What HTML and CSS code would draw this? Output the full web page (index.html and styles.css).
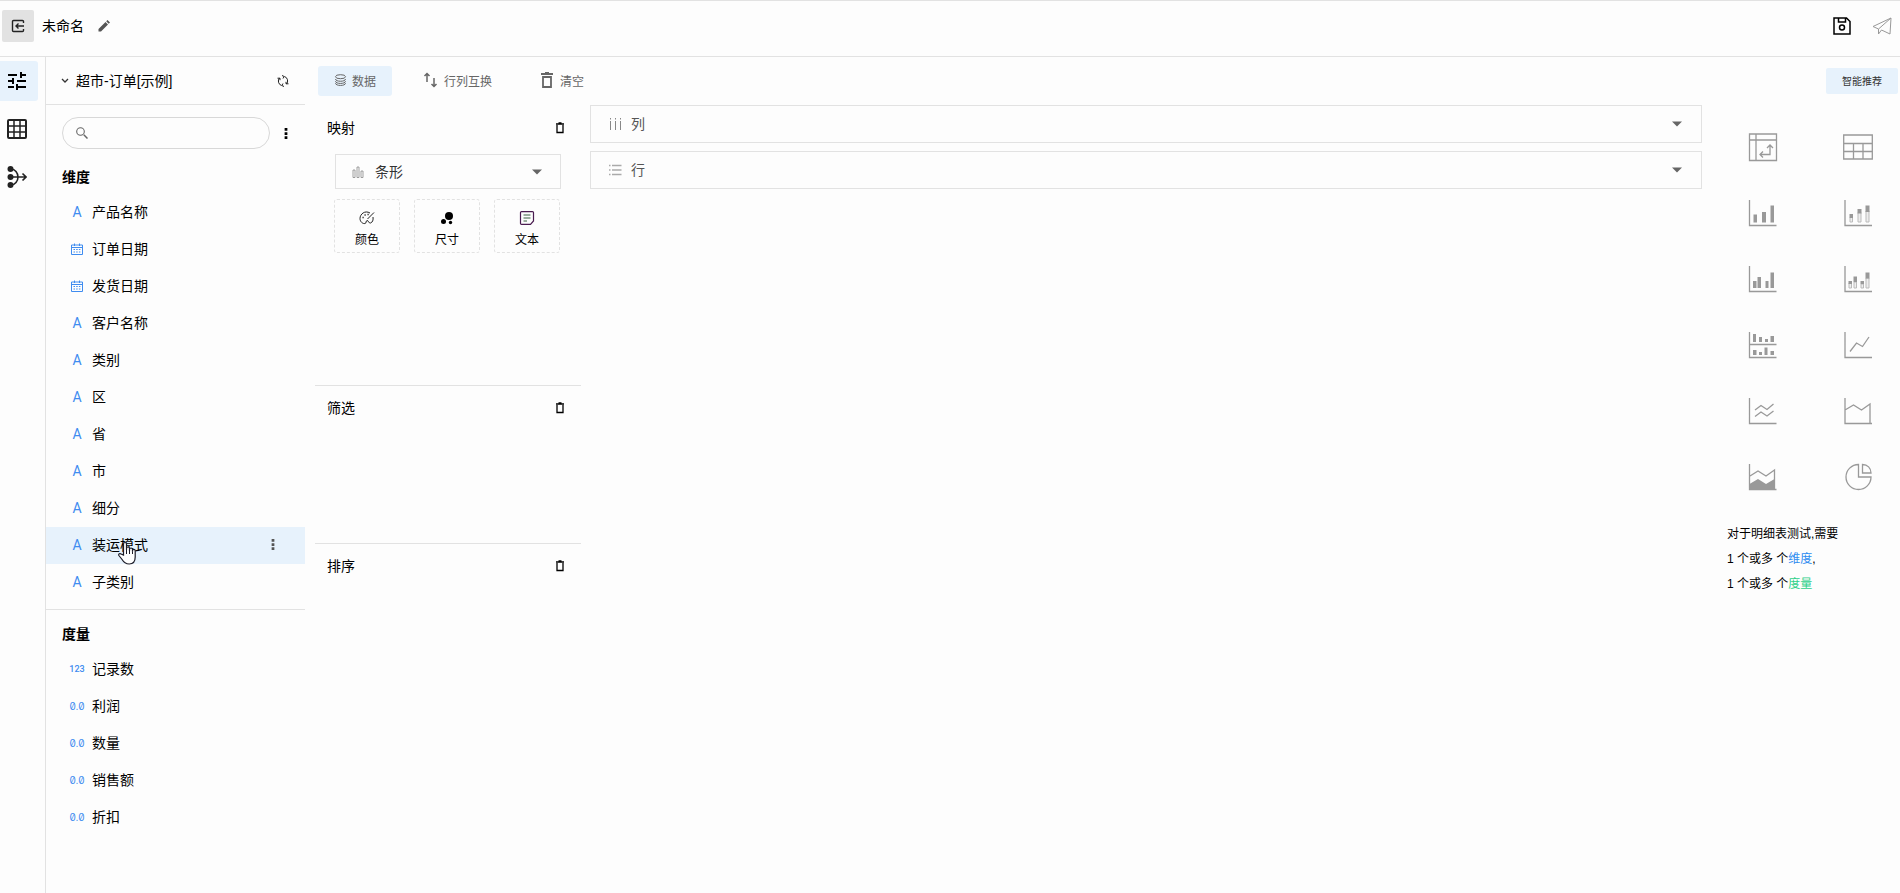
FILE: index.html
```html
<!DOCTYPE html>
<html lang="zh-CN">

<head>
    <meta charset="UTF-8">
    <meta name="viewport" content="width=device-width, initial-scale=1.0">
    <title>未命名</title>
    <link rel="stylesheet" href="styles.css">
</head>

<body>
    <svg class="sprite" aria-hidden="true">
        <symbol id="trash" viewBox="0 0 10 12">
            <path d="M1 2h8M3.500 1h3M2 3v7.500h6V3" fill="none" stroke="currentColor" stroke-width="1.300" />
        </symbol>
        <symbol id="dots" viewBox="0 0 4 12">
            <path d="M.5 0h3v3h-3zM.5 4.500h3v3h-3zM.5 9h3v3h-3z" fill="currentColor" />
        </symbol>
        <symbol id="calendar" viewBox="0 0 12 12">
            <path d="M.5 2h11v9.500H.5zM.5 4.500h11M3.500.5V3M8.500.5V3" fill="none" stroke="currentColor" />
            <path d="M2.500 6.500h7M2.500 9h7" fill="none" stroke="currentColor" stroke-dasharray="1.500 1.200" />
        </symbol>
        <symbol id="caret" viewBox="0 0 10 6">
            <path d="M0 .5h10L5 5.500z" fill="currentColor" />
        </symbol>
    </svg>

    <header class="header">
        <button class="back-btn" aria-label="返回">
            <svg width="14" height="14" viewBox="0 0 14 14">
                <path d="M12.500 4V2.500a1 1 0 0 0-1-1h-9a1 1 0 0 0-1 1v9a1 1 0 0 0 1 1h9a1 1 0 0 0 1-1V10M13 7H5M7.500 4.500L5 7l2.500 2.500" />
            </svg>
        </button>
        <h1 class="title">未命名</h1>
        <button class="icon-btn edit-btn" aria-label="编辑">
            <svg width="12" height="12" viewBox="0 0 12 12">
                <path d="M.5 11.500V9L7.500 2l2.500 2.500-7 7zM8.200 1.300L9.500 0 12 2.500l-1.300 1.300z" fill="#555" />
            </svg>
        </button>
        <div class="header-actions">
            <button class="icon-btn" aria-label="保存">
                <svg width="18" height="18" viewBox="0 0 18 18">
                    <path d="M1 1h12.500L17 4.500V17H1zM5.500 1v4h7V1" fill="none" stroke="#000" stroke-width="1.500" />
                    <circle cx="9" cy="10.500" r="2.500" fill="none" stroke="#000" stroke-width="1.500" />
                </svg>
            </button>
            <button class="icon-btn" aria-label="发布">
                <svg width="20" height="18" viewBox="0 0 20 18">
                    <path d="M19 1L1 9.500l5.500 2.500L19 1l-1 16-8.500-4M6.500 12v5l3-4" fill="none" stroke="#999" stroke-linejoin="round" />
                </svg>
            </button>
        </div>
    </header>

    <div class="layout">
        <nav class="rail">
            <button class="rail-btn active" aria-label="设置">
                <svg width="20" height="20" viewBox="0 0 20 20">
                    <path d="M1 4h9M14 4h5M14 1v6M1 10h5M10 10h9M6 7v6M1 16h6M10 16h9M10 13v6" stroke-width="2" />
                </svg>
            </button>
            <button class="rail-btn" aria-label="表格">
                <svg width="20" height="20" viewBox="0 0 20 20">
                    <rect x="1" y="1" width="18" height="18" rx="1" stroke-width="2" />
                    <path d="M7 1v18M13 1v18M1 7h18M1 13h18" stroke-width="1.500" />
                </svg>
            </button>
            <button class="rail-btn" aria-label="关联">
                <svg width="20" height="22" viewBox="0 0 20 22">
                    <circle cx="3.500" cy="3" r="3" fill="#222" stroke="none" />
                    <circle cx="3.500" cy="11" r="3" fill="#222" stroke="none" />
                    <circle cx="3.500" cy="19" r="3" fill="#222" stroke="none" />
                    <path d="M3 11h16M15.500 7.500L19 11l-3.500 3.500M4 3c4 0 7 4 7 8s-3 8-7 8" stroke-width="1.600" />
                </svg>
            </button>
        </nav>

        <aside class="sidebar">
            <div class="dataset">
                <svg width="8" height="6" viewBox="0 0 8 6">
                    <path d="M1 1l3 3 3-3" fill="none" stroke="#333" stroke-width="1.300" />
                </svg>
                <span class="dataset-name">超市-订单[示例]</span>
                <button class="icon-btn" aria-label="刷新">
                    <svg width="12" height="12" viewBox="0 0 12 12">
                        <path d="M4.500 10.500A4.700 4.700 0 0 1 2.500 3M7.500 1.500A4.700 4.700 0 0 1 9.500 9M.5 3.200h2.500v2M11.500 8.800H9v-2M5 .5L7.200 1.500 6 3.500M7 11.500l-2.200-1L6 8.500" fill="none" stroke="#222" />
                    </svg>
                </button>
            </div>

            <div class="search-row">
                <label class="search">
                    <svg width="12" height="12" viewBox="0 0 12 12">
                        <path d="M7.800 7.800L11.500 11.500" stroke="#666" stroke-width="1.500" />
                        <circle cx="4.500" cy="4.500" r="3.800" fill="none" stroke="#666" stroke-width="1.100" />
                    </svg>
                    <input type="text" aria-label="搜索">
                </label>
                <button class="icon-btn" aria-label="更多"><svg width="4" height="11"><use href="#dots" /></svg></button>
            </div>

            <section class="fields">
                <h2>维度</h2>
                <ul>
                    <li><span class="type">A</span>产品名称</li>
                    <li><span class="type"><svg width="12" height="12"><use href="#calendar" /></svg></span>订单日期</li>
                    <li><span class="type"><svg width="12" height="12"><use href="#calendar" /></svg></span>发货日期</li>
                    <li><span class="type">A</span>客户名称</li>
                    <li><span class="type">A</span>类别</li>
                    <li><span class="type">A</span>区</li>
                    <li><span class="type">A</span>省</li>
                    <li><span class="type">A</span>市</li>
                    <li><span class="type">A</span>细分</li>
                    <li class="hovered">
                        <span class="type">A</span>装运模式
                        <button class="icon-btn row-menu" aria-label="更多"><svg width="4" height="11"><use href="#dots" /></svg></button>
                        <svg class="pointer" width="18" height="24" viewBox="0 0 18 24">
                            <path d="M5.500 14V3a1.500 1.500 0 0 1 3 0v6-1.500a1.400 1.400 0 0 1 3 0V10 8.500a1.400 1.400 0 0 1 3 0v2.200-1a1.300 1.300 0 0 1 2.700 0V16c0 4-2 7-6 7-4.500 0-6-2.500-7.500-5L.9 14.500c-.8-1.500 1-2.600 2.200-1.500z" fill="#fff" stroke="#1c1c28" stroke-width="1.200" />
                            <path d="M8.500 9v4M11.500 10v3M14.500 10.500V13" stroke="#1c1c28" />
                        </svg>
                    </li>
                    <li><span class="type">A</span>子类别</li>
                </ul>
            </section>

            <section class="fields measures">
                <h2>度量</h2>
                <ul>
                    <li><span class="type int">123</span>记录数</li>
                    <li><span class="type decimal">0.0</span>利润</li>
                    <li><span class="type decimal">0.0</span>数量</li>
                    <li><span class="type decimal">0.0</span>销售额</li>
                    <li><span class="type decimal">0.0</span>折扣</li>
                </ul>
            </section>
        </aside>

        <main class="workspace">
            <div class="toolbar">
                <button class="tool-btn active">
                    <svg width="13" height="12" viewBox="0 0 13 12">
                        <ellipse cx="6.500" cy="2.700" rx="5" ry="2" />
                        <path d="M1.500 5c0 3 10 3 10 0M1.500 7.200c0 3 10 3 10 0M1.500 9.200c0 3 10 3 10 0" />
                    </svg>
                    数据
                </button>
                <button class="tool-btn">
                    <svg width="16" height="16" viewBox="0 0 16 16">
                        <path d="M4 10V1.500M1.500 4L4 1.500 6.500 4M11 6v8.500M8.500 12l2.500 2.500 2.500-2.500" stroke-width="1.500" />
                    </svg>
                    行列互换
                </button>
                <button class="tool-btn">
                    <svg width="16" height="16" viewBox="0 0 16 16">
                        <path d="M2 2h12M6 1h4M4 5v10h8V5z" stroke-width="1.800" />
                    </svg>
                    清空
                </button>
            </div>

            <div class="board">
                <div class="shelves">
                    <section class="shelf mapping">
                        <div class="shelf-head">
                            <h3>映射</h3>
                            <button class="icon-btn" aria-label="清空映射"><svg width="10" height="12"><use href="#trash" /></svg></button>
                        </div>
                        <label class="picker chart-type">
                            <svg width="12" height="12" viewBox="0 0 12 12">
                                <path d="M1 4h2v7.500H1zM5 1h2v10.500H5zM9 5h2v6.500H9z" fill="none" stroke="#888" stroke-width=".8" />
                            </svg>
                            <select aria-label="图表类型">
                                <option>条形</option>
                            </select>
                            <svg class="caret" width="10" height="6"><use href="#caret" /></svg>
                        </label>
                        <div class="marks">
                            <button class="mark">
                                <svg width="16" height="14" viewBox="0 0 16 14">
                                    <path d="M11 2C6-1 1 3 1 7.500 1 11 4 13 6 12.500c1.800-.5.500-2.500 2-3 1.500-.4 1.500 3 3.500 2.500 2-.6 3-3 2.500-6M15 1.500L8.500 8" fill="none" stroke="#222" />
                                    <path d="M3.500 6.500h1.200M5.500 4h1.200M8.500 3.500h1.200" stroke="#222" stroke-width="1.400" />
                                </svg>
                                颜色
                            </button>
                            <button class="mark">
                                <svg width="16" height="14" viewBox="0 0 16 14">
                                    <circle cx="10" cy="5" r="4" />
                                    <circle cx="4.500" cy="10.500" r="2.500" />
                                    <circle cx="11.500" cy="11.500" r="1.700" />
                                </svg>
                                尺寸
                            </button>
                            <button class="mark">
                                <svg width="16" height="14" viewBox="0 0 16 14">
                                    <path d="M2.500.6h11a1 1 0 0 1 1 1V10l-3 3.400h-9a1 1 0 0 1-1-1V1.600a1 1 0 0 1 1-1z" fill="none" stroke="#4a1c50" stroke-width="1.200" />
                                    <path d="M4.500 4h7M4.500 7h7M4.500 10H8" stroke="#386040" />
                                </svg>
                                文本
                            </button>
                        </div>
                    </section>
                    <section class="shelf">
                        <div class="shelf-head">
                            <h3>筛选</h3>
                            <button class="icon-btn" aria-label="清空筛选"><svg width="10" height="12"><use href="#trash" /></svg></button>
                        </div>
                    </section>
                    <section class="shelf">
                        <div class="shelf-head">
                            <h3>排序</h3>
                            <button class="icon-btn" aria-label="清空排序"><svg width="10" height="12"><use href="#trash" /></svg></button>
                        </div>
                    </section>
                </div>

                <div class="axes">
                    <label class="picker">
                        <svg width="14" height="12" viewBox="0 0 14 12">
                            <path d="M2.500 0v1.500M7.500 0v1.500M12.500 0v1.500M2.500 3v9M7.500 3v9M12.500 3v9" stroke="#888" />
                        </svg>
                        <select aria-label="列">
                            <option>列</option>
                        </select>
                        <svg class="caret" width="10" height="6"><use href="#caret" /></svg>
                    </label>
                    <label class="picker">
                        <svg width="14" height="12" viewBox="0 0 14 12">
                            <path d="M1 1.500h1.500M1 6h1.500M1 10.500h1.500M4 1.500h9.500M4 6h9.500M4 10.500h9.500" stroke="#aaa" stroke-width="1.500" />
                        </svg>
                        <select aria-label="行">
                            <option>行</option>
                        </select>
                        <svg class="caret" width="10" height="6"><use href="#caret" /></svg>
                    </label>
                </div>
            </div>
        </main>

        <aside class="recommend">
            <button class="recommend-btn">智能推荐</button>
            <div class="chart-grid">
                <button aria-label="透视表">
                    <svg viewBox="0 0 30 30">
                        <path d="M1.500 2h27v26.500h-27zM8 2v26.500M1.500 8h27M22 13v9.500H12M19 16l3-3 3 3M15 19.500l-3 3 3 3" />
                    </svg>
                </button>
                <button aria-label="明细表">
                    <svg viewBox="0 0 30 30">
                        <path d="M.7 3h28.600v24H.7zM.7 11.500h28.600M.7 19.500h28.600M10.500 11.500V27M20 11.500V27" />
                    </svg>
                </button>
                <button aria-label="柱状图">
                    <svg viewBox="0 0 30 30">
                        <path d="M1.500 2v25.500h27" />
                        <path class="solid" d="M5.500 16.500h3.500v8H5.500zM14 14h4v10.500h-4zM22.500 7.500H26v17h-3.500z" />
                    </svg>
                </button>
                <button aria-label="堆积柱状图">
                    <svg viewBox="0 0 30 30">
                        <path d="M2 2v25.500h27" />
                        <path class="light" d="M7 19.500h2.500v4.500H7zM15 14.500h3v9.500h-3zM23 13h3v11h-3z" />
                        <path class="solid" d="M6.500 16h3.500v4H6.500zM14.500 11h4v4.500h-4zM22.500 7.500h4V14h-4z" />
                    </svg>
                </button>
                <button aria-label="分组柱状图">
                    <svg viewBox="0 0 30 30">
                        <path d="M1.500 2v25.500h27" />
                        <path class="solid" d="M5 17h3.500v7H5zM9.500 13H13v11H9.500zM17.500 17h3v7h-3zM22.500 8.500H26V24h-3.500z" />
                    </svg>
                </button>
                <button aria-label="分组堆积柱状图">
                    <svg viewBox="0 0 30 30">
                        <path d="M2 2v25.500h27" />
                        <path class="light" d="M6 19h2.500v5H6zM11 18h2.500v6H11zM18 20h2.500v4H18zM23 14h3v10h-3z" />
                        <path class="solid" d="M5.500 17H9v3H5.500zM10.500 12.500H14v5.500h-3.500zM17.500 17H21v3h-3.500zM22.500 8.500h4v6h-4z" />
                    </svg>
                </button>
                <button aria-label="双轴柱状图">
                    <svg viewBox="0 0 30 30">
                        <path d="M1.500 2v25.500h27M1.500 14.500h27" />
                        <path class="solid" d="M5 4h3v8H5zM11 7h3v5h-3zM17 9h3v3h-3zM22.500 6H26v6h-3.500zM5 20h3.500v5H5zM11 22h3v3h-3zM16.500 17.500h3V25h-3zM22.500 21H26v4h-3.500z" />
                    </svg>
                </button>
                <button aria-label="折线图">
                    <svg viewBox="0 0 30 30">
                        <path d="M2 2v25.500h27M7 21.500l6.500-8.500 6 3.500L26 7" />
                    </svg>
                </button>
                <button aria-label="多折线图">
                    <svg viewBox="0 0 30 30">
                        <path d="M1.500 2v25.500h27M7 14l6-4.500 6 4L25.500 8M7 20.500l6-4.500 6 4 6.500-5" />
                    </svg>
                </button>
                <button aria-label="面积图">
                    <svg viewBox="0 0 30 30">
                        <path d="M2 2v25.500h27M2 14l8.500-5 8 5 8.500-6v19.500" />
                    </svg>
                </button>
                <button aria-label="堆积面积图">
                    <svg viewBox="0 0 30 30">
                        <path d="M1.500 2v25.500h27M2 14l8-5 8 5 8.500-6v19.500" />
                        <path class="solid" d="M1.500 22l8.500-5 8 5 8.500-5v10.500h-25z" />
                    </svg>
                </button>
                <button aria-label="饼图">
                    <svg viewBox="0 0 30 30">
                        <path d="M15.500 2.500A12.500 12.500 0 1 0 28 15H15.500zM19.500 2.500v8.500H28c0-5-3.500-8.500-8.500-8.500z" />
                    </svg>
                </button>
            </div>
            <div class="hint">
                <p>对于明细表测试,需要</p>
                <p>1 个或多 个<span class="dimension">维度</span>,</p>
                <p>1 个或多 个<span class="measure">度量</span></p>
            </div>
        </aside>
    </div>
</body>

</html>
```
FILE: styles.css
```css
* {
    box-sizing: border-box;
}

body {
    margin: 0;
    min-height: 100vh;
    display: flex;
    flex-direction: column;
    font-family: "Liberation Sans", "Noto Sans CJK SC", sans-serif;
    font-size: 14px;
    line-height: 20px;
    color: #000;
    background-color: #fdfdfd;
}

h1,
h2,
h3,
p,
ul {
    margin: 0;
    padding: 0;
    font-size: 14px;
    font-weight: normal;
}

ul {
    list-style: none;
}

button,
input,
select {
    font-family: inherit;
    font-size: 14px;
    border: none;
    background: none;
    padding: 0;
    outline: none;
}

button {
    cursor: pointer;
    color: inherit;
}

svg {
    display: block;
    flex-shrink: 0;
}

.sprite {
    display: none;
}

.icon-btn {
    display: flex;
    align-items: center;
    justify-content: center;
}

/* header */
.header {
    display: flex;
    align-items: center;
    height: 57px;
    padding: 0 8px 6px 2px;
    border-top: 1px solid #e2e2e2;
    border-bottom: 1px solid #e2e2e2;
}

.back-btn {
    display: flex;
    align-items: center;
    justify-content: center;
    width: 32px;
    height: 32px;
    border-radius: 2px;
    background-color: #e2e2e2;
}

.back-btn svg {
    fill: none;
    stroke: #222;
    stroke-width: 1.4;
}

.title {
    margin-left: 8px;
}

.edit-btn {
    margin-left: 14px;
}

.header-actions {
    display: flex;
    gap: 21px;
    margin-left: auto;
}

/* layout */
.layout {
    display: flex;
    flex: 1;
}

.rail {
    display: flex;
    flex-direction: column;
    gap: 8px;
    width: 46px;
    padding-top: 4px;
    border-right: 1px solid #e2e2e2;
}

.rail-btn {
    display: flex;
    align-items: center;
    justify-content: center;
    width: 38px;
    height: 40px;
    padding-right: 4px;
    border-radius: 0 3px 3px 0;
}

.rail-btn svg {
    fill: none;
    stroke: #222;
}

.rail-btn.active,
.tool-btn.active,
.recommend-btn,
.hovered {
    background-color: #e7f2fc;
}

.rail-btn.active svg {
    stroke: #000;
}

/* sidebar */
.sidebar {
    width: 259px;
}

.dataset {
    display: flex;
    align-items: center;
    height: 48px;
    padding: 0 16px 0 15px;
    border-bottom: 1px solid #e2e2e2;
}

.dataset-name {
    flex: 1;
    margin-left: 7px;
}

.search-row {
    display: flex;
    align-items: center;
    gap: 14px;
    padding: 12px 16px;
}

.search {
    display: flex;
    align-items: center;
    gap: 8px;
    width: 208px;
    height: 32px;
    padding: 0 13px;
    border: 1px solid #d8d8d8;
    border-radius: 16px;
}

.search input {
    flex: 1;
    min-width: 0;
}

.fields h2 {
    padding: 6px 16px 7px;
    font-weight: bold;
}

.fields li {
    display: flex;
    align-items: center;
    position: relative;
    height: 37px;
    padding: 0 0 2px 21px;
}

.type {
    display: flex;
    justify-content: center;
    width: 20px;
    margin-right: 5px;
    font-family: Roboto, sans-serif;
    font-size: 14px;
    color: #3f8cf0;
}

.type.int {
    font-size: 9px;
    font-weight: 500;
}

.type.decimal {
    font-family: Inter, sans-serif;
    font-size: 10px;
    font-feature-settings: "zero";
}

.row-menu {
    margin-left: auto;
    margin-right: 30px;
    color: #555;
}

.pointer {
    position: absolute;
    left: 72px;
    top: 14px;
}

.measures {
    margin-top: 8px;
    padding-top: 8px;
    border-top: 1px solid #e2e2e2;
}

/* workspace */
.workspace {
    display: flex;
    flex-direction: column;
    flex: 1;
    min-width: 0;
}

.toolbar {
    display: flex;
    gap: 15px;
    padding: 9px 13px;
}

.tool-btn {
    display: flex;
    align-items: center;
    gap: 5px;
    height: 30px;
    padding: 0 16px 2px;
    border-radius: 3px;
    font-size: 12px;
    color: #666;
}

.tool-btn svg {
    fill: none;
    stroke: #666;
}

.board {
    display: flex;
    gap: 9px;
    padding-left: 10px;
}

.shelves {
    width: 266px;
}

.shelf {
    height: 158px;
    border-top: 1px solid #e2e2e2;
}

.shelf.mapping {
    height: 280px;
    border-top-color: transparent;
}

.shelf-head {
    display: flex;
    align-items: center;
    justify-content: space-between;
    height: 44px;
    padding: 0 16px 0 12px;
}

.picker {
    display: flex;
    align-items: center;
    gap: 9px;
    height: 38px;
    padding: 0 19px 0 17px;
    border: 1px solid #e2e2e2;
    color: #555;
}

.picker select {
    flex: 1;
    appearance: none;
    color: inherit;
}

.chart-type {
    height: 35px;
    margin: 4px 20px 10px;
    padding: 0 18px 0 16px;
    gap: 11px;
    color: #333;
}

.caret {
    color: #666;
}

.marks {
    display: flex;
    gap: 14px;
    margin-left: 19px;
}

.mark {
    display: flex;
    flex-direction: column;
    align-items: center;
    justify-content: center;
    gap: 5px;
    width: 66px;
    height: 54px;
    padding-top: 6px;
    border: 1px dashed #e2e2e2;
    border-radius: 3px;
    font-size: 12px;
}

.axes {
    display: flex;
    flex-direction: column;
    flex: 1;
    gap: 8px;
}

/* recommended charts */
.recommend {
    width: 198px;
    padding-top: 11px;
}

.recommend-btn {
    display: block;
    width: 72px;
    height: 26px;
    margin: 0 2px 0 auto;
    padding-bottom: 2px;
    border-radius: 2px;
    font-size: 10px;
    color: #333;
}

.chart-grid {
    display: grid;
    grid-template-columns: 30px 30px;
    justify-content: space-between;
    row-gap: 36px;
    padding: 38px 27px 30px 46px;
}

.chart-grid svg {
    width: 30px;
    height: 30px;
    fill: none;
    stroke: #999;
    stroke-width: 1.3;
}

.chart-grid .solid {
    fill: #999;
    stroke: none;
}

.chart-grid .light {
    fill: #eee;
    stroke: #bbb;
    stroke-width: 1;
}

.hint {
    padding-left: 25px;
}

.hint p {
    font-size: 12px;
    line-height: 25px;
}

.dimension {
    color: #2d8cf0;
}

.measure {
    color: #2fd08a;
}
```
